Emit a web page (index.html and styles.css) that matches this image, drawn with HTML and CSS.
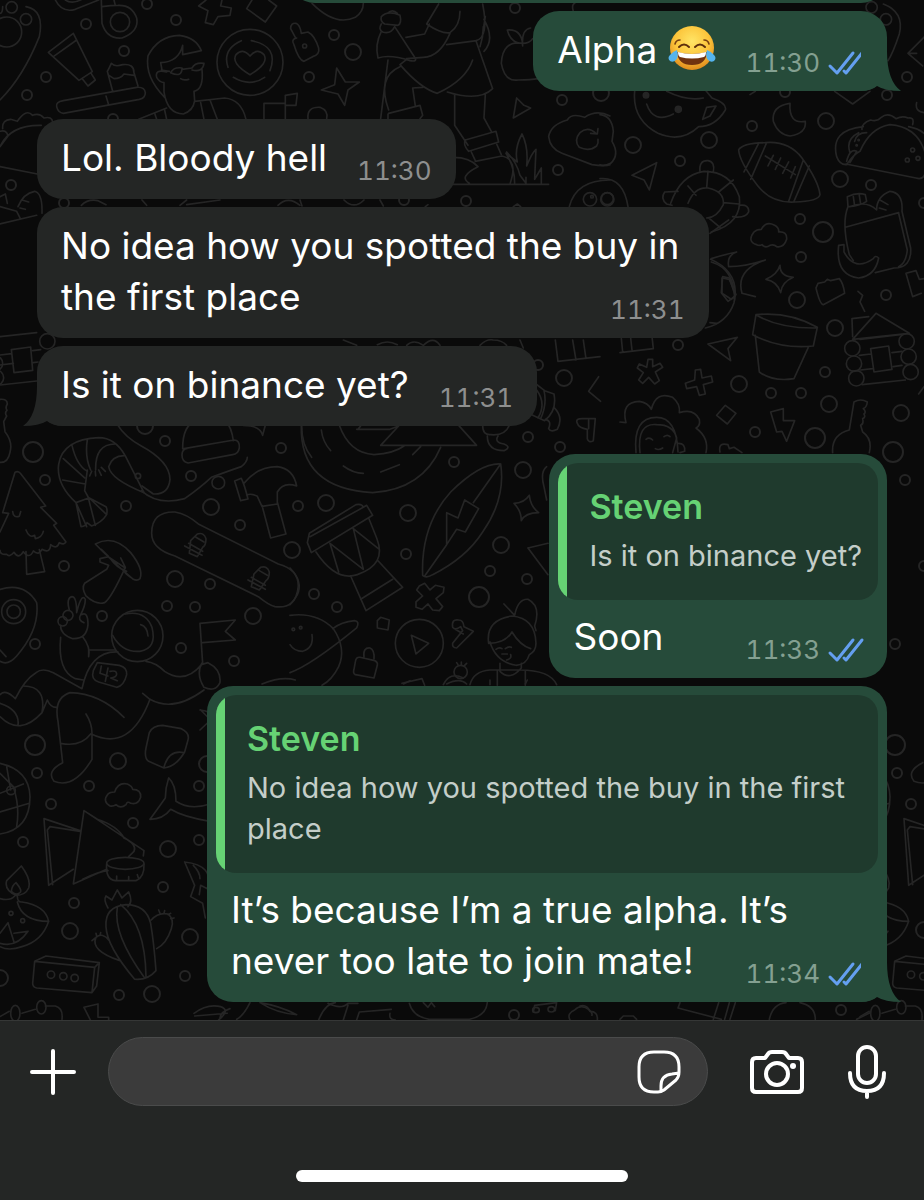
FILE: index.html
```html
<!DOCTYPE html>
<html lang="en">
<head>
  <meta charset="UTF-8">
  <meta name="viewport" content="width=device-width, initial-scale=1.0">
  <title>Steven</title>
  <link rel="stylesheet" href="styles.css">
</head>
<body>
  <main class="chat">
    <svg class="wallpaper" viewBox="0 0 924 1020" preserveAspectRatio="xMinYMin slice" aria-hidden="true">
      <defs>
        <!-- left part of the tile, drawn again 860px to the right -->
        <g id="tile-a">
          <g transform="translate(0 330) scale(.3333)">
            <path d="M0 20 110 8M0 75l35-4M0 105l40-5M100 98l14-2M0 165l110-12M34 59l58-8 6 70-56 7zM98 62l24-3"/>
            <circle cx="142" cy="34" r="23"/><circle cx="-15" cy="100" r="23"/><circle cx="-12" cy="143" r="23"/>
            <path d="M0 208q22-2 22 14-7 12-1 19-8 7-1 17l-9 17 4 30q24 30 15 62-6 32-30 30"/>
            <path d="M45 427q8-6 16 3l76 98-15 4 48 48-9 6 37 50q-5 10-20 2-8 22-26 6-2 28-26 14-10 20-26 5-12 26-30 2-14 24-28 2-14 16-22 6-20 2-20-12M45 427 8 548l18 2L0 606M38 545q2 20 20 14l4-14M78 600q10 26 26 16l2 10q20-4 24-22M78 665l2 68 54-8-16-66"/>
            <path d="M228 518q-60-55-52-115 12-75 120-80 50 0 80 55l56 110q-100-40-106-78 10-32 46-33M262 420l-8 62 12 22-38 14 15 72q15-2 18-12l14 10q30-10 45-34l-52-50 50 26q5 8 2 24M188 450l68 12M190 386l64 58M216 346q14 60 46 78M262 330q-8 50 10 90M345 342q-60 0-58 78M275 424l-6 14M286 424l1 14M296 420l8 16M304 412l12 12M228 518l32 72M264 500l22 86"/>
            <circle cx="414" cy="438" r="8"/>
            <path d="M354 286q20 34 70 62 85 46 86 100-4 46-50 44l-34-24M424 482q50 46 130 24 48-34 80-64 55-20 90-32 18-14 18-28"/><circle cx="655" cy="458" r="19"/>
            <path d="M548 356q0-72 40-82M700 332q-5-40-24-60M552 356l150-26q18 0 16 24-3 18-20 20l-134 25q-18-4-18-24 0-18 16-20"/>
            <path d="M730 286q50 0 58 30l8-30M905 286q0 60 30 96"/>
            <path d="M704 453l20-8q10 20 20 62l-22 5zM732 460q40-50 100-50 48 6 58 58-40-14-58 18v36l-46 7-14-30q-18-10-32-4M786 526l26 98 46-12-26-96"/>
            <path d="M455 610q0-66 70-64 36 6 70 36l240 120q60 16 60 66-6 70-70 62-18-4-50-30L525 678q-70-20-70-68"/>
            <path d="M572 632l20-20q20-6 26 14 0 20-10 26l-16 28-24-10zM566 640l42 24M554 648l52 28M588 622l24 14M762 732l20-20q20-6 26 14 0 20-10 26l-20 28-24-10zM754 742l42 24M744 750l52 28M778 722l24 14"/>
            <path d="M286 642q56-30 106 26 40 50 28 78-8 8-20 2-70-60-114-106zM304 658l22 22-26 6v10l26 10-6 12-66 42q-10 14 4 38 30 28 56 20 20-14 62-106l-14-28M330 684l46 30q-14 8 16 28M330 684q20 30 50 40"/>
          </g>
          <g transform="translate(0 600) scale(.3333)">
            <path d="M0-32q74-22 110 40 10 80-60 160-26 30-50 16M0 150l18 20"/><circle cx="41" cy="35" r="36"/><circle cx="41" cy="35" r="20"/>
            <circle cx="188" cy="64" r="14"/><circle cx="204" cy="46" r="15"/><path d="M208 30q-10-36 8-40 14 0 14 48 14-60 26-40 0 20-14 46-10 16 10 24M244 44q20-12 20 30-4 44-46 42-38-14-36-40M182 112q-10 100 44 124l24 4M248 110q24 30 18 60M266 170v-20h80"/>
            <circle cx="412" cy="108" r="77"/><path d="M376 42q60-12 80 40 16 64-36 72-54 4-82-48M422 74q20 6 22 34"/>
            <path d="M292 188l66 8q24 6 22 28-8 34-30 38l-54-16q-24-8-16-34zM304 198l-4 22 24 8M324 204l-8 40M330 214q20-4 20 8 0 10-18 12l20 8"/>
            <path d="M354 156q-84-4-108 110L160 218q-32-16-52 0-34 20-62 78-30-30-46-12M70 258q70 0 56 80l16-38q10 24 30 22M0 310q60 20 54 66M0 350q60 60 126-12M438 184q30 4 56 30 60 40 110-20l20-6q40 20 36 60-14 30-48 14-26-42-4-76M428 280l22 18q70 40 162-28M450 298q-60 160-176 104M372 352Q300 280 210 278q-50 16-36 86l14 124q-50 26-26 56 60 24 114-66V400q0-30-18-58M182 430q60 12 90-28M608 190l-8-120 106-10-30 34 30 26-98 8"/>
            <path d="M448 398q10-22 40-22l56 10q26 12 20 34l-10 36q-26 44-62 48l-46-20q-14-10-8-40zM492 502q14-54 60-44M600 330q30 2 40 20M600 390l32-30-30-30"/>
            <path d="M0 490q88 20 90 100 0 98-90 112M0 520l40 40q20 60 10 120M0 580l70-28M0 636l88-26M20 500l12 70"/><circle cx="33" cy="571" r="13"/>
            <path d="M330 618q-24-14-6-36 6-6 20-6 10-30 38-24 14 6 16 16 26 0 24 24-8 24-30 18-10-8-14 4-16 14-30 0-8 6-18 4z"/>
            <path d="M630 612q-60 20-102-8 0-50-22-70-10 30-10 60-24 34-46 64 40 0 62-30 40 24 118 36"/>
            <path d="M132 656l14 200 74-48M132 656l108 36M150 680l-8 10 16 164M150 680l90 14M252 632l-32 220 100-44M252 632l180 120-2 16M252 632l40 26q60 20 80 56 40 20 30 40l-16 16M248 838q50-24 76-26"/>
            <ellipse cx="376" cy="790" rx="56" ry="18"/><path d="M320 792q-4 46 26 50h62q26-10 24-50M350 828v12M386 830v12M412 824l4 12"/>
            <path d="M64 798q30 40 22 66-10 22-38 22-36-16-28-44zM48 848q20 24 12 30-14 10-26-4 2-18 14-26M0 896q30 8 44-8M52 888q0 20 14 18 70 10 80 58-80 0-94-58M146 964q-20 60-80 76-40 14-66 0M0 1000l24-32 18 58M0 1030q50 14 84-36l-42 6"/><circle cx="33" cy="940" r="6"/><circle cx="68" cy="962" r="6"/>
            <path d="M324 924q-14-24-6-36l18 12 16-30 14 24 20-18q14 30-2 44M318 980q-4-60 60-66 60 0 74 56 10 60 16 142-26 30-64 26-84-100-86-158M352 922q-14 80 82 212M362 914q74 60 76 216M454 960q20-24 50-18 20 16 10 44-14 44-44 60M360 1082q-90-30-72-70 20-16 40 10M286 1014l-10 8M290 1008l-2-8M300 1006l2-8M480 940l-4-10M492 940l2-8M504 944l8-4M512 956l10-2"/>
            <path d="M104 1084l180 18-8 76-166-14q-12-2-12-14zM104 1084l34-16 160 20-14 14M298 1088l-8 70-14 20M284 1102l14-14"/><circle cx="153" cy="1124" r="11"/><circle cx="190" cy="1129" r="11"/><circle cx="224" cy="1134" r="11"/>
            <path d="M0 1250l28-16M66 1240l40-12M136 1218h30q24 6 20 40M252 1222l42-10v40h32v10M252 1222l20 40"/><ellipse cx="46" cy="1240" rx="14" ry="24"/><ellipse cx="124" cy="1222" rx="14" ry="20"/>
            <path d="M554 786q90 10 68 80l-20-10-4 28M554 786l30 70-12 34 36 20 8 44M580 796q20 20 20 40M582 1240q40-30 80-20 30 10-6 40M584 1248l98-8M690 1226q-30 10-30 30"/>
          </g>
        </g>
      </defs>
      <use href="#tile-a"/>
      <g clip-path="inset(430px 0 0 0)"><use href="#tile-a" x="860"/></g>
      <g transform="scale(.3333)">
        <circle cx="20" cy="96" r="45"/><circle cx="35" cy="22" r="17"/><circle cx="78" cy="58" r="17"/>
        <path d="M78 20q56 10 40 90Q70 230 0 300M0 40q8 0 8-20"/>
        <path d="M166 0q20 40 60 28l70-28M196 0q20 14 50-2M304 0l2 70q14 48 60 44 52-20 44-60-14-40-56-38-20 0-48 4M342 0l4 16"/><circle cx="360" cy="66" r="29"/>
        <path d="M220 100l-75 57 92 84 40-26zM160 170l70-50M248 238l16 20 22-18-14-22"/>
        <path d="M338 274l-16-60q6-10 12-24 10 12 34 4 34-4 34 24l12 40M326 226l16 10q20 0 30-14l30 4M170 320q-4-14 20-18l220-40q24-2 26 16 0 16-18 20L190 340q-16-2-20-20M318 288l8 26"/>
        <path d="M494 292q-60-60-50-124 30-60 94-62 50 6 66 46l-56 12v-28q-12 50-66 52l4 22M500 216q-36-10-30 16 8 14 22 16v28q10 66 58 66 30-10 34-40l-2-28q30-6 24-66M508 214l-24-4M512 218q10-18 34-14 0 30-34 14M546 208l30-4M576 204q10-18 36-14-4 28-36 20M542 236q8 6 24 2M416 358l84-34M584 304l90-10q50 4 64 64M464 340l6 18M494 330l6 28M602 308l10 50M630 300l22 58"/>
        <circle cx="750" cy="187" r="99"/><path d="M750 224q-58-34-42-60 20-22 42 4 22-26 42-4 16 26-42 60M724 122q-58 26-40 80M754 122q84 16 56 90M700 232q50 30 94 0"/>
        <path d="M618 0l-22 18 28 14-8 36 24 6 14-24 36-4 4-22-32-6 4-18M756 0l-16 26 56 40 34-48-24-18M792 358v-48h64v48M856 310v-24l36-6-4 36h-32"/>
        <path d="M886 112l-14-26q0-18 16-16 12 4 16 30l20-4q20 10 32 48 4 20-18 26l-26 14q-16-4-30-50-10-16 8-20"/><circle cx="914" cy="138" r="6"/>
        <path d="M8 386q-2-26 24-28l20 6q26-40 46-18 20-8 34 8 24-6 26 12M0 394q20-6 24 14L0 440q30-66 124-64M0 500l112 22M0 590l16-8 6 28M0 620l50 14 10 20M0 672l110-26M54 620q16-40 50-46 24 6 22 66M66 600l20 6M60 624l16 4M244 616q20-20 50-14l24 12M426 600l14 16M560 600l-20 16M560 614l100-14M834 616q30-30 66 0"/>
      </g>
      <g transform="translate(300 0) scale(.3333)">
        <path d="M36 10q70 70 130 42 24-16 24-42"/>
        <path d="M244 50q20-20 56-4 6 24-6 30l-40-4q-14-8-10-22M262 40q16-14 30 0M244 72q-10 16 4 24 24 8 36-16l60 92q10 14-14 10-60-20-96-8-10-40 10-80"/>
        <path d="M318 112l56-10 14-30M416 12l-36 60q44 30 70 26 30-20 30-64M450 100q-30 70-80 72l-50 4M440 134l90-12M548 12q20 100-20 110l50 144q-40 40-136 10M518 180q-20 60-106 100-50-14-112-86l20-16M552 58q34 60 0 96M548 100l8-50M540 140q10-30 10-60M264 180l-10 80-12 96M300 200q-70 30-34 130M266 340l94-24 8 30-8 10M264 342v16M368 262l-30 2 8 54M464 286v90l40 60M556 284l-4 70 22 40M496 420l92-26 8 32-90 28q-18-20-10-34M514 456l12 26M590 432l14 32"/>
        <path d="M460 472q50 0 74 28-60 30-26 50M526 484l80-16q50 10 24 84M454 553h292M620 456q30 30 40 70l18 24M644 550q0-50-26-90l34 26q-10-40 14-84 20 40 14 96 16-40 28-50l-4 90 20-34v46M678 532v18"/>
        <path d="M110 204l26 42 42 0-34 24-10 46-20-34-50-12 40-16zM24 356q-4-36 36-34 26 10 20 34"/>
        <path d="M668 130q-60-10-64 60 10 56 50 50 40 0 60-4M668 130q20 0 30-14M622 90q40-4 46 40-36 0-46-40M668 138q-4-50 24-54M650 294l-10 60 52-30-20-8zM820 34q-6-20 4-24"/>
        <path d="M930 348q-40-20-76 4-40-14-52 8-50 14-56 50 4 36 40 50l90 34q40 6 54 0M872 400l20 2 2-16M890 402q-26-26-50-4-20 24-2 44 30 14 52-4 6-8 4-20M808 620q20-80 122-80"/>
        <circle cx="870" cy="598" r="20"/><circle cx="922" cy="598" r="20"/><circle cx="876" cy="590" r="4"/>
        <path d="M240 600l10 18M132 600q30 30 60 0M376 620l8-6M0 600l6 18M640 620l12-8 10 8"/>
      </g>
      <g transform="translate(600 0) scale(.3333)">
        <path d="M104 274q-8 84 70 126 70 30 122-20 50 0 80-50 6-20-40-36l-20-24M320 322l28-4-18 30-22 10zM200 274q60 30 110 20M140 312q20 60 80 30M450 284l16-10M704 274l54 38 52-38"/><circle cx="138" cy="286" r="8" class="fill"/><circle cx="235" cy="328" r="9" class="fill"/>
        <path d="M570 310q-56 8-50 54 14 40 50 44 50-8 46-44-50 10-46-54"/>
        <path d="M416 450q10-20 80-22 70-6 110 46 50 70 54 110-4 20-76 22-70 4-112-50-54-72-56-106M476 430l-44 86M500 428l-48 110M610 480l-44 124M628 498l-46 106M496 468l90 56M520 466l-16 32M542 474l-16 34M566 486l-18 34M586 500l-14 34"/>
        <path d="M786 388q-2-18 26-28 20 6 32-8 20-16 44 4 20-10 36-2 20-4 14 20M790 380q-100 10-80 90 10 26 30 24 20-30 40-40 30-70 90-80 80 6 104 80M738 492l210 42q20 6 26-10M926 380q30 6 46 20M776 398q-40 20-26 60M800 398q-30 0-36 26M740 484q10-40 30-30l-20 34"/>
        <circle cx="938" cy="450" r="6"/><circle cx="922" cy="480" r="6"/><circle cx="954" cy="475" r="6"/><circle cx="776" cy="420" r="2"/><circle cx="770" cy="436" r="2"/>
        <path d="M0 344q36 4 40 50l-4 30q24 40-4 66-20 10-32 4M0 536q70-6 84 84M170 488l-74 38 36 14 16 30z"/><circle cx="22" cy="596" r="18"/>
        <path d="M212 610q30-86 100-96 80 0 106 76 10 80-84 106M300 516q-4-36 24-34 22 4 16 34M234 574l-40 2q-14 20 6 36l16 4M418 616q30-4 28 20-10 20-48 14M264 610q20-50 60-46 50 10 46 50-20 40-50 40M264 558l24 28M324 514l-4 50M400 540l-44 36M416 612l-46-4M326 654l34 28"/>
        <path d="M470 734q-30-10-8-38 8-8 22-8 14-26 40-12 14 8 12 20 26-2 24 22-8 26-30 22-8-8-20-4-14 10-24-2-8 4-16 0"/>
        <path d="M742 590q30-14 54-6l4 20q-20 14-56 16zM760 590l4 28M778 586l4 26M744 620q-20 50 4 144l12 18M736 682l160-44M750 620q50-20 80 10M830 630q0-40 40-56 40 4 36 60l26 110q4 60-50 60l-56 14M896 640l26 110q-4 40-26 50M840 600l24 14M838 624l20 6M732 734l-16 2q-10 90 60 98 50-6 60-60-10-10-16 2-56 40-88-20z"/>
        <path d="M540 796q0 34 40 36-34 14-38 46-10-34-44-40 34-14 42-42M334 776q30-10 76-20-30 10-24 44 50 0 110-20-90 30-70 100l40 10M334 786q70 20 70 114M366 834l22 4 20 46-14 14-28-18zM918 820l30-8 10 26 14-2M918 820l20 70 26-10"/>
        <path d="M950 160l-26 0 50-50M924 160l44 38M950 308q-6 26 22 30"/><circle cx="815" cy="22" r="17"/><circle cx="858" cy="58" r="17"/><path d="M850 12q64 24 48 90-20 60-34 80"/>
      </g>
      <g transform="translate(620 220) scale(.3333)">
        <path d="M270 40l56-40M272 118q90 40 70 130-20 60-86 76M308 170l20 4 18 54-22 16-20-26zM290 310l-20-2"/>
        <path d="M588 204l6-14 20-4 8-8 10 4 26-6q12 14 16 44l-64 34q-10 0-22-50M714 214l14 12-8 20 14 28"/>
        <path d="M408 284q100-10 184 38l-12 56q-100 10-182-34zM410 286q70 40 180 38M406 346l12 110q40 30 104 20l44-96"/>
        <path d="M264 372l88-20-28 34 8 36zM0 398l100-12-4-36M36 390l-4-36M8 396l-4-40"/>
        <path d="M698 358l70-78 100 60zM698 350l-2-54 50-6M720 358l120-14M718 406l34-4M816 398l30-4M722 450l36-4M820 440l26-4M726 494l130-14M752 386l54-8 10 70-54 8z"/>
        <circle cx="697" cy="385" r="23"/><circle cx="702" cy="431" r="23"/><circle cx="709" cy="475" r="23"/><circle cx="860" cy="364" r="23"/><circle cx="866" cy="410" r="23"/><circle cx="872" cy="456" r="23"/>
        <path d="M84 418l14 0v22l22-10 8 12-22 14 12 26-14 10-18-20-18 18-12-10 14-22-18-14 6-12 22 10zM226 450l16-2 4 26 28-6 4 18-28 8 6 28-18 4-8-26-30 6-4-16 28-10zM316 556l32 24-26 32-32-26zM452 576l38-10v36h34l-24 62-14-30-16 2zM702 546q20-12 40 0-2 16-12 20 10 10 2 16 6 10-4 14 4 16-6 20l6 20q30 20 20 62M702 546l-14 84q-54 14-50 68"/>
        <path d="M0 606l18 2q-16-62 40-64 26 4 36 24 14-56 64-36 24 20 20 46 44-14 60 20 4 20-10 26 40 30 30 74M48 698q-10-106 62-106 60 0 64 104M60 698q-10-90 50-84 50 0 60 40l-12 44M176 670q20 0 18 24l-14 4M78 658q10-8 20 2M132 650q10-8 18 0M106 686q10 6 22-2M300 696q-6-30 24-22l4 12 14-4 24 16"/>
        <path d="M896 522l16-22"/>
      </g>
      <g transform="translate(290 340) scale(.3333)">
        <path d="M34 256q-6 190 214 202 150-10 204-136M148 256q30 84 104 88 60-4 90-26M94 270q4 36 28 62M160 378q30 22 60 22M272 396l56-22M368 344l24-24M200 268h100l26-10-54 58h288l-54-60M204 268l8-10"/>
        <path d="M578 256q0 30 24 28 44 4 56-28M592 288q0 44 50 44 24-10 0-20-30-4-18-24M738 132l26 20 28 10q10 50-28 80l-44-20M740 150q30 40 4 84M762 152q10 40-10 84M792 202q30 30 10 66-20 10-26-2 10-24-10-28"/>
        <path d="M632 372q-60-4-150 84-90 100-84 250 10 10 30-2 100-50 150-128 70-100 54-204M632 372l-82 116M404 708l66-94M524 480l42 26-40 70-26-8-30 46v-96l34 16z"/>
        <path d="M926 110l-30 44 36 30M862 250q-8-16 20-14h34l-6 66q-14 8-18-6v-28q-26-4-30-18M896 240v26M796 0l8 64 126-14M848 0l10 60M880 0l8 56"/>
        <path d="M672 490q30 0 46-24 4 34 28 52-40 0-52 24 0-30-22-52M714 624l60-14M714 624l60 80M770 380q-20 16-8 60l8 40"/>
        <path d="M52 608l6-28 140-86q18-4 22 8l10-6 18 30-184 112zM60 590l160-88M78 636q60 90 124 68 90-30 58-110l-24-60M146 696l-26-86 100 78-30-122 78 62M182 708l46 104 110-70-76-82M212 778l96-60"/>
        <path d="M388 738l16-8 16 20 16-14 26 6-2 16-22 18 20 24-10 12-20-2-14-18-18 16-18-6v-16l20-18-18-18zM262 842l10-10 26 8-4 30-32-6z"/>
        <circle cx="388" cy="910" r="72"/><path d="M364 886l52 24-38 32zM488 862q-4-26 18-22 14 0 16 20l28 14-50 50q-14 0-12-14l30-38-6-12q-16 12-24 2M496 868l24 14"/>
        <path d="M0 826q80-10 130 40 40 60 16 114-20 40-50 56M0 998q60-20 200-134 10-20-6-22-40 4-66 24M0 684q40 40 22 80-10 20-22 30M66 884q6 40-28 50-26 0-38-20M196 966q2-16 14-14l44 10q10 4 8 14l-10 38-56-10q-8-4-4-16zM222 952q-4-30 18-28 14 6 12 32"/><circle cx="10" cy="868" r="4"/><circle cx="32" cy="863" r="4"/>
        <path d="M596 910q-10-70 70-82 70 6 72 82 0 24-20 34-8 30-40 32-60-10-78-70M596 910q50 0 70-34 24 40 56 50M642 792l32 34q10-50 40-48 40 20 20 80l4 14M618 928q10-8 18-2M646 926q10-8 18-4M636 942h16M662 944q4 12-12 16M630 970v24q30 30 64-10v-14M540 1034q10-40 60-44h90q90 0 110 44M622 992v44M706 992v44M460 1034q20-40 60-20"/><circle cx="512" cy="996" r="20"/><path d="M504 974l-4-6M514 974v-8M524 976l6-6M336 1030l60-14 8 20"/>
        <path d="M160 0l40 16M350 16q20-20 50 0M400 16q30-30 50 0M570 16q20-20 40-16 26 0 40 16M690 0l10 24M262 14q30-16 60 0"/>
      </g>
      <g transform="translate(200 680) scale(.3333)">
        <path d="M356 1020q20-50 50-52M384 970q40 20 60 0h30M430 1020l14-44M470 1020l8-24 96-8M570 1000q-4 20 16 20M628 970q10 40 60 48h120q50-10 54-50M670 968l14 14 10-14 10 12M180 968q60 10 110 36-60-4-110-36M150 968q-20 40-40 50M1000 996l4-20 66-8-4 24"/><ellipse cx="1008" cy="990" rx="10" ry="8"/><ellipse cx="1054" cy="988" rx="10" ry="8"/><path d="M1110 1020q-10-20 14-30 20-20 44 0 10 8 8 16"/>
        <path d="M186 12q60-24 100-12M610 12l20-10M740 12q40-20 60 0M870 0v14M976 12l6-12"/>
      </g>
      <g transform="translate(580 900) scale(.3333)">
        <path d="M300 308l-6 16 130 34M400 358l16-50M434 358l14-50M450 358l16-50M0 318q20-6 30 16 24 0 22 26M120 358l10-10h30l10 10M568 358q10-46 50-50M660 308q46 10 46 50M830 358l40-20"/>
      </g>
      <!-- loose dots between the doodles -->
      <g>
        <circle cx="147" cy="4" r="5"/><circle cx="86" cy="24" r="5"/><circle cx="124" cy="51" r="5"/><circle cx="176" cy="20" r="5"/><circle cx="46" cy="77" r="5"/><circle cx="27" cy="95" r="5"/><circle cx="11" cy="185" r="5"/><circle cx="64" cy="203" r="5"/><circle cx="113" cy="119" r="5"/>
        <circle cx="309" cy="77" r="5"/><circle cx="334" cy="35" r="5"/><circle cx="353" cy="52" r="8"/><circle cx="515" cy="8" r="5"/><circle cx="562" cy="100" r="5"/><circle cx="558" cy="170" r="5"/><circle cx="466" cy="201" r="5"/><circle cx="404" cy="200" r="5"/><circle cx="601" cy="93" r="8"/>
        <circle cx="633" cy="145" r="8"/><circle cx="709" cy="140" r="8"/><circle cx="680" cy="161" r="5"/><circle cx="752" cy="126" r="5"/><circle cx="826" cy="121" r="8"/><circle cx="840" cy="179" r="8"/><circle cx="871" cy="185" r="5"/><circle cx="800" cy="219" r="5"/><circle cx="823" cy="232" r="10"/><circle cx="801" cy="257" r="5"/><circle cx="907" cy="77" r="5"/><circle cx="887" cy="95" r="5"/><circle cx="924" cy="203" r="5"/><circle cx="886" cy="295" r="5"/><circle cx="797" cy="300" r="8"/><circle cx="785" cy="92" r="5"/>
        <circle cx="835" cy="328" r="8"/><circle cx="678" cy="345" r="5"/><circle cx="825" cy="372" r="5"/><circle cx="739" cy="384" r="8"/><circle cx="771" cy="393" r="5"/><circle cx="801" cy="393" r="5"/><circle cx="829" cy="404" r="8"/><circle cx="755" cy="432" r="5"/><circle cx="815" cy="438" r="10"/><circle cx="901" cy="413" r="8"/><circle cx="893" cy="452" r="10"/><circle cx="905" cy="480" r="5"/><circle cx="924" cy="566" r="5"/><circle cx="895" cy="644" r="5"/><circle cx="895" cy="745" r="10"/><circle cx="897" cy="773" r="5"/><circle cx="911" cy="804" r="5"/><circle cx="924" cy="930" r="8"/>
        <circle cx="145" cy="426" r="8"/><circle cx="165" cy="441" r="5"/><circle cx="33" cy="452" r="10"/><circle cx="45" cy="480" r="5"/><circle cx="281" cy="448" r="5"/><circle cx="191" cy="476" r="5"/><circle cx="126" cy="506" r="5"/><circle cx="211" cy="507" r="8"/><circle cx="240" cy="525" r="5"/><circle cx="298" cy="506" r="5"/><circle cx="292" cy="550" r="8"/><circle cx="64" cy="566" r="5"/><circle cx="175" cy="579" r="8"/><circle cx="210" cy="584" r="5"/><circle cx="167" cy="606" r="5"/><circle cx="195" cy="607" r="5"/><circle cx="102" cy="616" r="5"/><circle cx="253" cy="616" r="8"/>
        <circle cx="538" cy="365" r="5"/><circle cx="564" cy="378" r="8"/><circle cx="528" cy="437" r="5"/><circle cx="560" cy="447" r="5"/><circle cx="454" cy="462" r="5"/><circle cx="523" cy="470" r="8"/><circle cx="326" cy="503" r="8"/><circle cx="408" cy="513" r="8"/><circle cx="406" cy="554" r="5"/><circle cx="501" cy="545" r="8"/><circle cx="490" cy="571" r="5"/><circle cx="527" cy="579" r="5"/><circle cx="314" cy="594" r="5"/><circle cx="337" cy="607" r="5"/><circle cx="479" cy="597" r="10"/>
        <circle cx="35" cy="644" r="5"/><circle cx="181" cy="648" r="5"/><circle cx="234" cy="661" r="5"/><circle cx="35" cy="745" r="10"/><circle cx="118" cy="761" r="8"/><circle cx="37" cy="773" r="5"/><circle cx="89" cy="786" r="5"/><circle cx="51" cy="804" r="5"/><circle cx="199" cy="786" r="5"/><circle cx="133" cy="823" r="5"/><circle cx="23" cy="842" r="5"/><circle cx="168" cy="849" r="8"/><circle cx="199" cy="840" r="5"/><circle cx="163" cy="887" r="5"/><circle cx="74" cy="903" r="5"/><circle cx="70" cy="931" r="8"/><circle cx="190" cy="937" r="8"/><circle cx="185" cy="976" r="5"/><circle cx="119" cy="995" r="5"/><circle cx="152" cy="994" r="8"/><circle cx="0" cy="978" r="8"/><circle cx="207" cy="764" r="8"/><circle cx="841" cy="1010" r="5"/><circle cx="514" cy="1015" r="5"/>
      </g>
    </svg>

    <div class="bubble out cut"></div>

    <div class="bubble out tail">
      <p>Alpha
        <svg class="emoji" viewBox="0 0 48 46" role="img" aria-label="Face with tears of joy">
          <defs>
            <radialGradient id="face" cx=".5" cy=".35" r=".65"><stop offset="0" stop-color="#ffe566"/><stop offset=".6" stop-color="#fcc43a"/><stop offset="1" stop-color="#e08a1c"/></radialGradient>
          </defs>
          <circle cx="24" cy="23" r="22" fill="url(#face)"/>
          <path d="M7 19q1-4 5-4M36 15q4 0 5 4" fill="none" stroke="#7a4210" stroke-width="1.6" stroke-linecap="round"/>
          <path d="M11 22q5-5 10 0M27 22q5-5 10 0" fill="none" stroke="#5e300c" stroke-width="2" stroke-linecap="round"/>
          <path d="M9 27q15 4 30 0-1 13-15 13T9 27z" fill="#70320f"/>
          <path d="M10 27q14 4 28 0 0 4-2 5-12 3-24 0-2-1-2-5z" fill="#fff"/>
          <path d="M9 25q2 7-1 10-3 3-6 1-3-3 0-6 2-3 7-5zM39 25q-2 7 1 10 3 3 6 1 3-3 0-6-2-3-7-5z" fill="#55b4ee"/>
        </svg>
        <span class="meta"><time>11:30</time><svg class="ticks" viewBox="1 0 34 24" role="img" aria-label="Read"><path d="M2 15l7 7L25 2M16 20l2 2L34 2"/></svg></span>
      </p>
      <svg class="tail-shape" viewBox="0 0 40 40" aria-hidden="true"><path d="M26 0q0 30 14 40-16 0-24-5-6 5-16 5V0z"/></svg>
    </div>

    <div class="bubble in first">
      <p>Lol. Bloody hell <span class="meta"><time>11:30</time></span></p>
    </div>

    <div class="bubble in">
      <p>No idea how you spotted the buy in the first place <span class="meta"><time>11:31</time></span></p>
    </div>

    <div class="bubble in tail">
      <p>Is it on binance yet? <span class="meta"><time>11:31</time></span></p>
      <svg class="tail-shape" viewBox="0 0 40 40" aria-hidden="true"><path d="M14 0q0 30-14 40 16 0 24-5 6 5 16 5V0z"/></svg>
    </div>

    <div class="bubble out first">
      <blockquote>
        <cite>Steven</cite>
        <span>Is it on binance yet?</span>
      </blockquote>
      <p>Soon <span class="meta"><time>11:33</time><svg class="ticks" viewBox="1 0 34 24" role="img" aria-label="Read"><path d="M2 15l7 7L25 2M16 20l2 2L34 2"/></svg></span></p>
    </div>

    <div class="bubble out tail">
      <blockquote>
        <cite>Steven</cite>
        <span>No idea how you spotted the buy in the first place</span>
      </blockquote>
      <p>It’s because I’m a true alpha. It’s never too late to join mate! <span class="meta"><time>11:34</time><svg class="ticks" viewBox="1 0 34 24" role="img" aria-label="Read"><path d="M2 15l7 7L25 2M16 20l2 2L34 2"/></svg></span></p>
      <svg class="tail-shape" viewBox="0 0 40 40" aria-hidden="true"><path d="M26 0q0 30 14 40-16 0-24-5-6 5-16 5V0z"/></svg>
    </div>
  </main>

  <footer>
    <form class="composer">
      <button type="button" aria-label="Attach">
        <svg width="46" height="46" viewBox="0 0 46 46"><path d="M23 2v42M2 23h42"/></svg>
      </button>
      <div class="field">
        <input type="text" aria-label="Message">
        <button type="button" aria-label="Stickers">
          <svg class="thin" width="44" height="44" viewBox="0 0 44 44"><path d="M42 22v-5Q42 2 27 2H17Q2 2 2 17v10q0 15 15 15h4q3 0 6-2l12-10q3-3 3-8zM24 41V36Q24 25 35 24l7-1"/></svg>
        </button>
      </div>
      <button type="button" aria-label="Camera">
        <svg width="54" height="44" viewBox="0 0 54 44"><path d="M6 8h9l3-4q1-2 4-2h10q3 0 4 2l3 4h9q4 0 4 4v26q0 4-4 4H6q-4 0-4-4V12q0-4 4-4z"/><circle cx="27" cy="24" r="11"/><circle class="dot" cx="43" cy="16" r="3"/></svg>
      </button>
      <button type="button" aria-label="Record voice message">
        <svg width="38" height="54" viewBox="0 0 38 54"><rect x="10" y="2" width="18" height="36" rx="9"/><path d="M2 28q0 18 17 18t17-18M19 46v6"/></svg>
      </button>
    </form>
    <div class="home-bar"></div>
  </footer>
</body>
</html>
```
FILE: styles.css
```css
* {
  box-sizing: border-box;
}
body {
  margin: 0;
  min-height: 100vh;
  display: flex;
  flex-direction: column;
  font-family: Inter, 'Liberation Sans', sans-serif;
  background: #0a0a0a;
  color: #fff;
}
.chat {
  flex: 1;
  position: relative;
  overflow: hidden;
  display: flex;
  flex-direction: column;
  align-items: flex-start;
  gap: 8px;
  padding: 0 37px 18px;
}
.wallpaper {
  position: absolute;
  top: 0;
  left: 0;
  width: 100%;
  fill: none;
  stroke: #252525;
  stroke-width: 2;
  stroke-linejoin: round;
  stroke-linecap: round;
}
.wallpaper g[transform] {
  stroke-width: 5;
}
.wallpaper .fill {
  fill: #252525;
}
.bubble {
  position: relative;
  border-radius: 26px;
  background: #242625;
}
.in {
  max-width: 79%;
}
.out {
  align-self: flex-end;
  max-width: 80%;
  background: #264b3a;
}
.first {
  margin-top: 20px;
}
/* older message that is scrolled out of view */
.cut {
  width: 598px;
  height: 80px;
  margin-top: -77px;
}
p {
  margin: 0;
  padding: 13px 24px 16px;
  font-size: 37px;
  line-height: 51px;
}
.meta {
  float: right;
  display: flex;
  align-items: center;
  gap: 9px;
  margin: 21px 0 0 30px;
  font-size: 26px;
  font-variant-numeric: tabular-nums;
  line-height: 36px;
  color: #8e8f8f;
}
.out .meta {
  color: #84a091;
}
.ticks {
  width: 34px;
  height: 24px;
  overflow: visible;
  fill: none;
  stroke: #649ff0;
  stroke-width: 3;
  stroke-linecap: round;
  stroke-linejoin: round;
}
.emoji {
  width: 48px;
  height: 46px;
  vertical-align: -8px;
}
.tail-shape {
  position: absolute;
  bottom: 0;
  width: 40px;
  height: 40px;
  fill: #242625;
}
.in .tail-shape {
  left: -14px;
}
.out .tail-shape {
  right: -14px;
  fill: #264b3a;
}
blockquote {
  margin: 9px 9px 0;
  padding: 22px 16px 24px 31px;
  border-radius: 20px;
  background: linear-gradient(90deg, #66d274 9px, #1f3a2d 9px);
}
cite {
  display: block;
  margin-bottom: 6px;
  font-size: 34px;
  font-style: normal;
  font-weight: 600;
  line-height: 44px;
  color: #66d274;
}
blockquote span {
  display: block;
  font-size: 29px;
  line-height: 41px;
  color: #c4cec9;
}
blockquote + p {
  padding-top: 11px;
}
footer {
  border-top: 1px solid #353736;
  background: #242625;
}
.composer {
  display: flex;
  align-items: center;
  padding: 16px 38px 0 30px;
}
.composer button {
  display: flex;
  padding: 0;
  border: none;
  background: none;
}
.composer svg {
  fill: none;
  stroke: #fff;
  stroke-width: 4;
  stroke-linecap: round;
  stroke-linejoin: round;
}
.composer .thin {
  stroke-width: 3;
}
.composer .dot {
  fill: #fff;
  stroke: none;
}
.field {
  flex: 1;
  min-width: 0;
  display: flex;
  align-items: center;
  height: 69px;
  margin: 0 42px 0 32px;
  padding-right: 26px;
  border: 1px solid #4a4b4b;
  border-radius: 35px;
  background: #3b3b3b;
}
.field input {
  flex: 1;
  min-width: 0;
  height: 100%;
  padding: 0 24px;
  border: none;
  outline: none;
  background: none;
  color: #fff;
  font: inherit;
  font-size: 37px;
}
.field + button {
  margin-right: 44px;
}
.home-bar {
  width: 36%;
  height: 12px;
  margin: 64px auto 18px;
  border-radius: 6px;
  background: #fff;
}
```
